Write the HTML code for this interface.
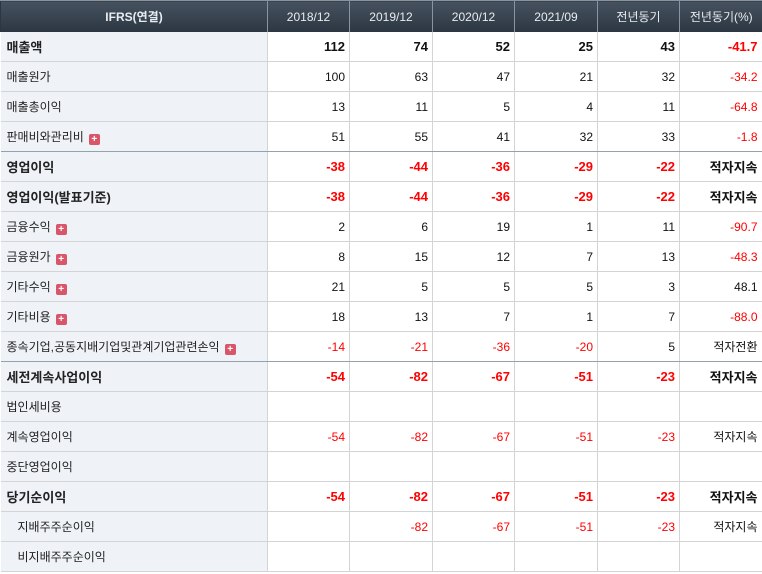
<!DOCTYPE html>
<html><head><meta charset="utf-8"><style>
body{margin:0;background:#fff;font-family:"Liberation Sans","Noto Sans CJK KR",sans-serif;}
table{border-collapse:collapse;table-layout:fixed;width:762px;position:absolute;left:0;top:0;}
th{height:31px;padding:0;background:linear-gradient(#46525f,#2b3642);color:#e8ecf0;font-size:12px;font-weight:normal;border-left:1px solid #8a949e;border-top:1px solid #8a949e;}
th:first-child{font-weight:bold;border-left:1px solid #2b3642;}
td{height:29px;padding:0 4px 0 0;border-bottom:1px solid #d4d4d4;border-left:1px solid #d4d4d4;text-align:right;font-size:12px;color:#111;}
td:first-child{text-align:left;padding-left:6px;background:#eff2f7;border-left:none;color:#222;}
td:last-child{padding-right:5px}
tr.b td{font-weight:bold;font-size:13px}
tr.pre td{border-bottom:1px solid #93a3ad}
.r{color:#ff0000}
.p{display:inline-block;width:11px;height:11px;background:#d9556a;border-radius:2px;color:#fff;font-size:10px;line-height:11px;text-align:center;vertical-align:-1px;margin-left:5px;font-weight:bold}
.i{padding-left:17px!important}
</style></head><body>
<table>
<colgroup><col style="width:267px"><col style="width:82px"><col style="width:83px"><col style="width:82px"><col style="width:83px"><col style="width:82px"><col style="width:83px"></colgroup>
<tr><th>IFRS(연결)</th><th>2018/12</th><th>2019/12</th><th>2020/12</th><th>2021/09</th><th>전년동기</th><th>전년동기(%)</th></tr>
<tr class="b"><td>매출액</td><td>112</td><td>74</td><td>52</td><td>25</td><td>43</td><td class="r">-41.7</td></tr>
<tr><td>매출원가</td><td>100</td><td>63</td><td>47</td><td>21</td><td>32</td><td class="r">-34.2</td></tr>
<tr><td>매출총이익</td><td>13</td><td>11</td><td>5</td><td>4</td><td>11</td><td class="r">-64.8</td></tr>
<tr class="pre"><td>판매비와관리비<span class="p">+</span></td><td>51</td><td>55</td><td>41</td><td>32</td><td>33</td><td class="r">-1.8</td></tr>
<tr class="b"><td>영업이익</td><td class="r">-38</td><td class="r">-44</td><td class="r">-36</td><td class="r">-29</td><td class="r">-22</td><td>적자지속</td></tr>
<tr class="b"><td>영업이익(발표기준)</td><td class="r">-38</td><td class="r">-44</td><td class="r">-36</td><td class="r">-29</td><td class="r">-22</td><td>적자지속</td></tr>
<tr><td>금융수익<span class="p">+</span></td><td>2</td><td>6</td><td>19</td><td>1</td><td>11</td><td class="r">-90.7</td></tr>
<tr><td>금융원가<span class="p">+</span></td><td>8</td><td>15</td><td>12</td><td>7</td><td>13</td><td class="r">-48.3</td></tr>
<tr><td>기타수익<span class="p">+</span></td><td>21</td><td>5</td><td>5</td><td>5</td><td>3</td><td>48.1</td></tr>
<tr><td>기타비용<span class="p">+</span></td><td>18</td><td>13</td><td>7</td><td>1</td><td>7</td><td class="r">-88.0</td></tr>
<tr class="pre"><td>종속기업,공동지배기업및관계기업관련손익<span class="p">+</span></td><td class="r">-14</td><td class="r">-21</td><td class="r">-36</td><td class="r">-20</td><td>5</td><td>적자전환</td></tr>
<tr class="b"><td>세전계속사업이익</td><td class="r">-54</td><td class="r">-82</td><td class="r">-67</td><td class="r">-51</td><td class="r">-23</td><td>적자지속</td></tr>
<tr><td>법인세비용</td><td></td><td></td><td></td><td></td><td></td><td></td></tr>
<tr><td>계속영업이익</td><td class="r">-54</td><td class="r">-82</td><td class="r">-67</td><td class="r">-51</td><td class="r">-23</td><td>적자지속</td></tr>
<tr><td>중단영업이익</td><td></td><td></td><td></td><td></td><td></td><td></td></tr>
<tr class="b"><td>당기순이익</td><td class="r">-54</td><td class="r">-82</td><td class="r">-67</td><td class="r">-51</td><td class="r">-23</td><td>적자지속</td></tr>
<tr><td class="i">지배주주순이익</td><td></td><td class="r">-82</td><td class="r">-67</td><td class="r">-51</td><td class="r">-23</td><td>적자지속</td></tr>
<tr><td class="i">비지배주주순이익</td><td></td><td></td><td></td><td></td><td></td><td></td></tr>
</table>
</body></html>
